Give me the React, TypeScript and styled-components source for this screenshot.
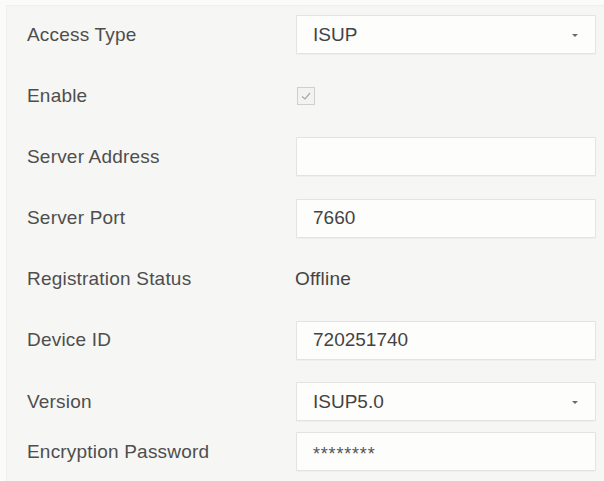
import React from 'react'
import styled, { createGlobalStyle } from 'styled-components'

const GlobalStyle = createGlobalStyle`
  html, body {
    margin: 0;
    padding: 0;
    background: #fbfbfa;
  }
  body {
    font-family: 'Liberation Sans', Arial, sans-serif;
  }
`

const Panel = styled.div`
  margin: 5px 0 0 6px;
  min-height: 476px;
  box-sizing: border-box;
  background: #f6f6f4;
  border-top: 1px solid #efefed;
  border-left: 1px solid #efefed;
  padding: 9px 0 0 20px;
  display: flex;
  flex-direction: column;
`

const Row = styled.div<{ $tight?: boolean }>`
  display: grid;
  grid-template-columns: 269px 300px;
  align-items: center;
  height: 39px;
  margin-top: ${p => (p.$tight ? '11px' : '22.2px')};

  &:first-child {
    margin-top: 0;
  }
`

const Label = styled.div`
  font-size: 19px;
  color: #4e4e4e;
  letter-spacing: 0.2px;
`

const Field = styled.div<{ $select?: boolean }>`
  position: relative;
  height: 39px;
  box-sizing: border-box;
  background: #fdfdfc;
  border: 1px solid #e3e3e1;
  border-radius: 1px;
  padding: 0 36px 0 16px;
  display: flex;
  align-items: center;
  font-size: 19px;
  color: #434343;
  box-shadow: 0 1px 1px rgba(0, 0, 0, 0.03);

  ${p =>
    p.$select &&
    `
    &:after {
      content: '';
      position: absolute;
      right: 17px;
      top: 50%;
      margin-top: -1px;
      border-left: 3.5px solid transparent;
      border-right: 3.5px solid transparent;
      border-top: 3.5px solid #6a6a6a;
    }
  `}
`

const Masked = styled.span`
  font-size: 18px;
  letter-spacing: 0.8px;
  transform: translateY(3px);
  color: #555;
`

const Plain = styled.div`
  font-size: 19px;
  color: #434343;
  margin-left: -1px;
  letter-spacing: 0.2px;
`

const Check = styled.div`
  width: 18px;
  height: 18px;
  box-sizing: border-box;
  border: 1px solid #cfcfcd;
  background: #f3f3f1;
  display: flex;
  align-items: center;
  justify-content: center;
  margin-left: 1px;
`

const CheckMark = () => (
  <svg width="12" height="12" viewBox="0 0 12 12">
    <polyline points="2,6.5 5,9 10,3" fill="none" stroke="#a8a8a6" strokeWidth="1.2" />
  </svg>
)

export default function App() {
  return (
    <>
      <GlobalStyle />
      <Panel>
        <Row>
          <Label>Access Type</Label>
          <Field $select>ISUP</Field>
        </Row>
        <Row>
          <Label>Enable</Label>
          <Check>
            <CheckMark />
          </Check>
        </Row>
        <Row>
          <Label>Server Address</Label>
          <Field />
        </Row>
        <Row>
          <Label>Server Port</Label>
          <Field>7660</Field>
        </Row>
        <Row>
          <Label>Registration Status</Label>
          <Plain>Offline</Plain>
        </Row>
        <Row>
          <Label>Device ID</Label>
          <Field>720251740</Field>
        </Row>
        <Row>
          <Label>Version</Label>
          <Field $select>ISUP5.0</Field>
        </Row>
        <Row $tight>
          <Label>Encryption Password</Label>
          <Field>
            <Masked>********</Masked>
          </Field>
        </Row>
      </Panel>
    </>
  )
}
